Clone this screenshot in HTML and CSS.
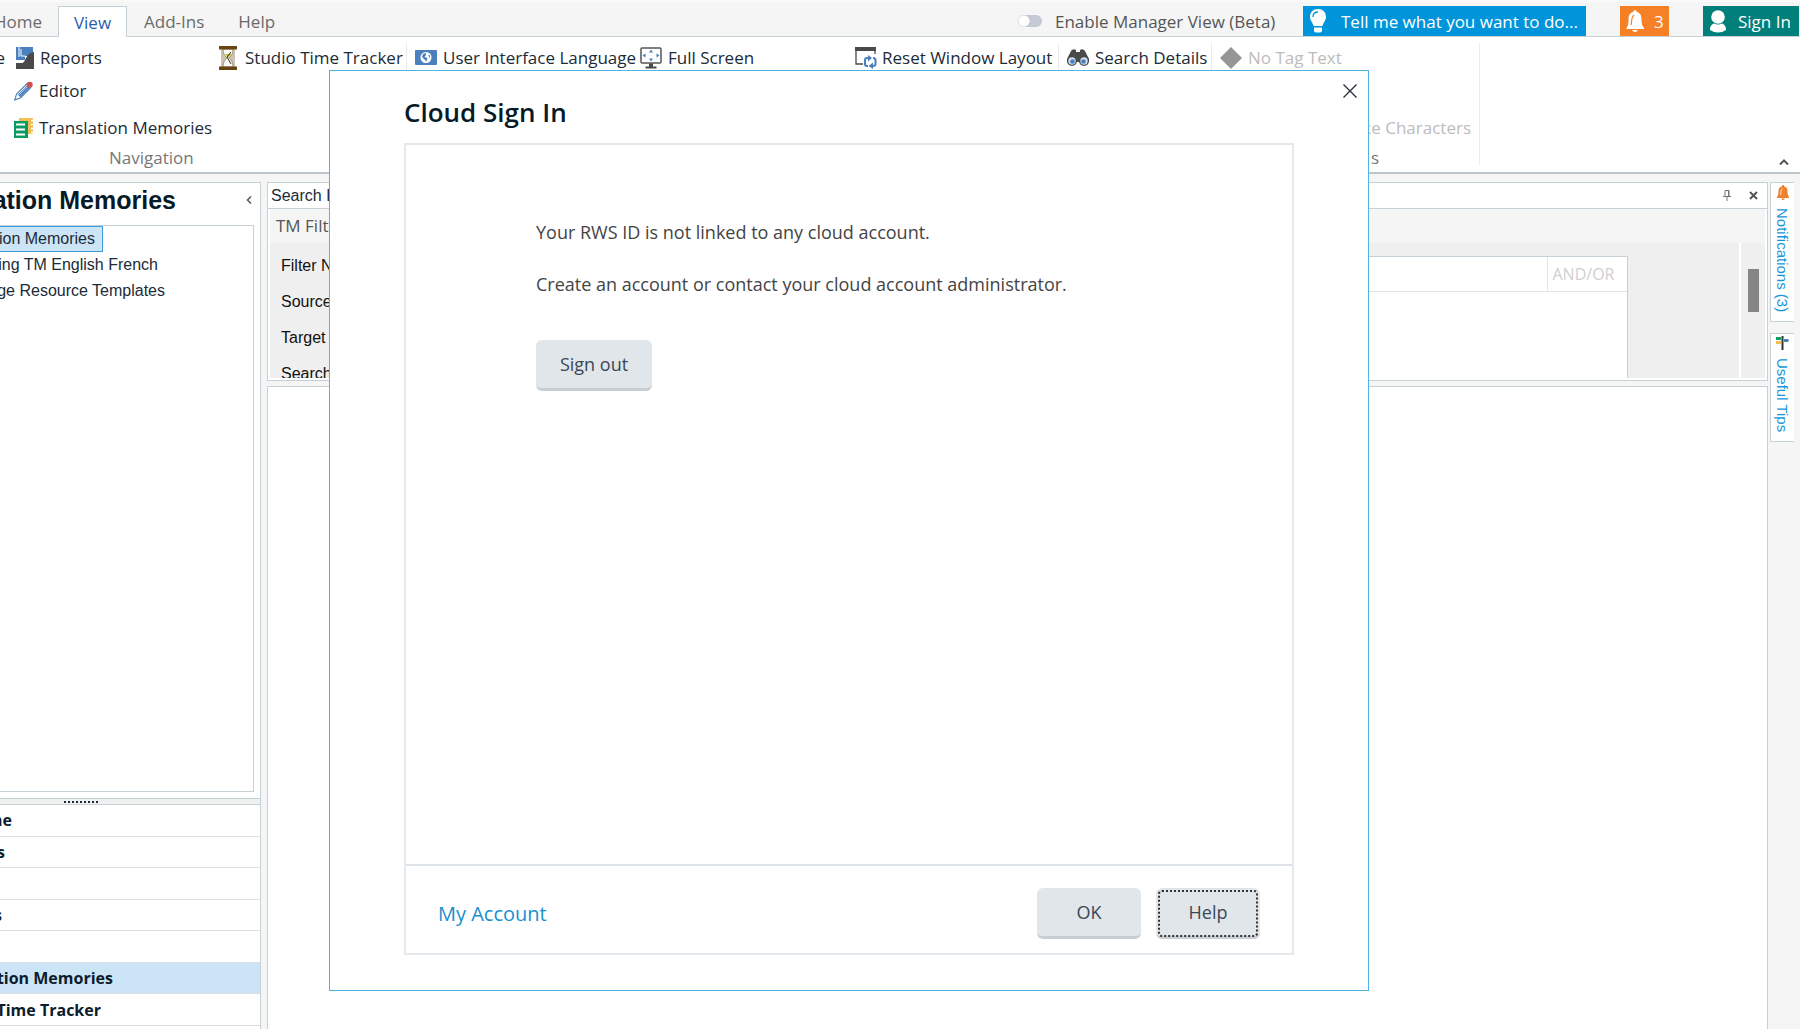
FILE: index.html
```
<!DOCTYPE html>
<html lang="en">
<head>
    <meta charset="UTF-8">
    <meta name="viewport" content="width=device-width, initial-scale=1.0">
    <title>Cloud Sign In</title>
    <link rel="stylesheet" href="styles.css">
</head>
<body>
    <div class="app">
        <header class="topbar">
            <nav class="tabs">
                <button class="tab tab-home">Home</button>
                <button class="tab active">View</button>
                <button class="tab">Add-Ins</button>
                <button class="tab">Help</button>
            </nav>
            <div class="manager">
                <input type="checkbox" id="manager-view">
                <label for="manager-view">Enable Manager View (Beta)</label>
            </div>
            <div class="tell-me">
                <svg width="18" height="24" viewBox="0 0 18 24"><path d="M9 0C4 0 1 3.500 1 8c0 3.500 2.500 5 3.500 9h9C14.500 13 17 11.500 17 8c0-4.500-3-8-8-8z" fill="#fff"/><path d="M4 8c0-3 2-5 5-5" fill="none" stroke="#0095da" stroke-width="1.300"/><path d="M5 18.500h8v3q0 2-2 2H7q-2 0-2-2z" fill="#fff"/></svg>
                <input type="text" class="tell-input" placeholder="Tell me what you want to do..." aria-label="Tell me what you want to do">
            </div>
            <button class="alerts">
                <svg width="18" height="22" viewBox="0 0 18 22"><path d="M9 0c1 0 1.600.8 1.600 1.800C14 2.600 15.500 5 15.500 9c0 5 1 7 2.500 9v1H.5v-1C2 16 2.500 14 2.500 9c0-4 1.500-6.400 4.900-7.200C7.400.8 8 0 9 0z" fill="#fff"/><path d="M5 15c1-3 0-8 3-10" fill="none" stroke="#f58025" stroke-width="1.200"/><path d="M6 20h6q-1 2-3 2t-3-2z" fill="#fff"/></svg>
                3
            </button>
            <button class="sign-in">
                <svg width="18" height="23" viewBox="0 0 18 23"><circle cx="9" cy="7" r="6.800" fill="#fff"/><path d="M1 20c0-4 2-6 4-6.500q4 2 8 0c2 .5 4 2.500 4 6.500q-8 5-16 0z" fill="#fff"/></svg>
                Sign In
            </button>
        </header>

        <section class="ribbon">
            <div class="group navigation">
                <div class="row">
                    <span class="clip-e">e</span>
                    <button class="tool">
                        <svg width="19" height="22" viewBox="0 0 19 22"><path d="M1 0h17v9h-8v4H1z" fill="#4a80bd"/><path d="M4 0v10M6 2v7h4" stroke="#fff" fill="none"/><path d="M1 22v-6h6c4 0 3-10 12-11v17z" fill="#4a4a4a"/></svg>
                        Reports
                    </button>
                </div>
                <div class="row indent">
                    <button class="tool">
                        <svg width="19" height="20" viewBox="0 0 20 20"><path d="M.7 19.300l2-6L13.500 2.500l4 4L6.700 17.300z" fill="#fff" stroke="#4a80bd" stroke-width="1.200"/><path d="M4 14L14 4l2.500 2.500-10 10z" fill="#4a80bd"/><path d="M5.500 14L14.500 5" stroke="#b8d0ea"/><circle cx="16.500" cy="3.500" r="3.200" fill="#d0504a"/></svg>
                        Editor
                    </button>
                </div>
                <div class="row indent">
                    <button class="tool">
                        <svg width="19" height="20" viewBox="0 0 19 20"><path d="M5 0h14v16H5z" fill="#eebf57"/><path d="M17 2.500h2M17 6.500h2M17 10.500h2M17 14.500h2" stroke="#fff" stroke-width="1.500"/><path d="M0 3h14v17H0z" fill="#0a9b63"/><path d="M2 6.500h9M2 11.500h9M2 16.500h9" stroke="#fff" stroke-width="2.200"/></svg>
                        Translation Memories
                    </button>
                </div>
                <div class="caption">Navigation</div>
            </div>
            <div class="group tracker">
                <div class="row">
                    <button class="tool">
                        <svg width="18" height="24" viewBox="0 0 18 24"><path d="M2 3h14v18H2z" fill="#cfc4ad"/><path d="M4 3h10c0 5-2 7-4 9 2 2 4 4 4 9H4c0-5 2-7 4-9-2-2-4-4-4-9z" fill="#fdfcf8" stroke="#9a8f78"/><path d="M6 8h7l-4 4z" fill="#bfc23a"/><path d="M12 6L8 11l4 7" stroke="#333" fill="none"/><path d="M0 0h18v3.500H0zM0 20.500h18V24H0z" fill="#6b4413"/></svg>
                        Studio Time Tracker
                    </button>
                </div>
            </div>
            <div class="group display">
                <div class="row">
                    <button class="tool language">
                        <svg width="22" height="15" viewBox="0 0 22 15"><rect width="22" height="15" rx="1" fill="#4a80bd"/><circle cx="11" cy="7.500" r="5.500" fill="#fff"/><path d="M8 4l3-1v2L9.500 7l3 1-1 3.500L9 9 7 7zM13 4.500l2 1v3z" fill="#4a80bd"/></svg>
                        User Interface Language
                    </button>
                    <button class="tool">
                        <svg width="22" height="22" viewBox="0 0 22 22"><rect x="1" y="1" width="20" height="15" rx="1" fill="#fff" stroke="#555" stroke-width="1.500"/><path d="M11 2.500l2 3H9zM11 14.500l2-3H9zM2.500 8.500l3-2v4zM19.500 8.500l-3-2v4z" fill="#4a80bd"/><path d="M9 16.500h4v3h3.500V21.500h-11V19.500H9z" fill="#4a4a4a"/></svg>
                        Full Screen
                    </button>
                </div>
            </div>
            <div class="group layout">
                <div class="row">
                    <button class="tool">
                        <svg width="22" height="22" viewBox="0 0 22 22"><path d="M1 4v13h7M20 4v3" fill="none" stroke="#4a4a4a" stroke-width="1.300"/><path d="M0 0h21v4H0z" fill="#4a4a4a"/><path d="M14 11h-2q-2 0-2 2v4q0 2 2 2h1M17 19h1q2.500 0 2.500-2v-4q0-2-2.500-2" fill="none" stroke="#4a80bd" stroke-width="2"/><path d="M13 8l4 3-4 3.500zM18 15.500l-4.500 3.500 4.500 3z" fill="#4a80bd"/></svg>
                        Reset Window Layout
                    </button>
                </div>
            </div>
            <div class="group details">
                <div class="row">
                    <button class="tool">
                        <svg width="22" height="17" viewBox="0 0 22 17"><path d="M4 2q2-3 5-1v2h4V1q3-2 5 1l4 8v3H0v-3z" fill="#4a4a4a"/><circle cx="5" cy="12" r="5" fill="#4a4a4a"/><circle cx="17" cy="12" r="5" fill="#4a4a4a"/><circle cx="5" cy="12" r="3.700" fill="#cfe0f3"/><circle cx="17" cy="12" r="3.700" fill="#cfe0f3"/><circle cx="5.500" cy="12.500" r="2.300" fill="#4a80bd"/><circle cx="16.500" cy="12.500" r="2.300" fill="#4a80bd"/></svg>
                        Search Details
                    </button>
                </div>
            </div>
            <div class="group tags">
                <div class="row">
                    <button class="tool" disabled>
                        <svg width="22" height="22" viewBox="0 0 22 22"><path d="M11 0l11 11-11 11L0 11z" fill="#969696"/></svg>
                        No Tag Text
                    </button>
                </div>
                <div class="row"></div>
                <div class="row right">
                    <button class="tool" disabled>ce Characters</button>
                </div>
                <div class="caption">s</div>
            </div>
            <button class="collapse" aria-label="Collapse ribbon">
                <svg width="10" height="6" viewBox="0 0 10 6"><path d="M1 5.500l4-4 4 4" fill="none" stroke="#555" stroke-width="2"/></svg>
            </button>
        </section>

        <main class="workspace">
            <aside class="sidebar">
                <div class="side-head">
                    <h2 class="side-title">ation Memories</h2>
                    <button class="plain" aria-label="Collapse panel">
                        <svg width="6" height="8" viewBox="0 0 6 8"><path d="M5 .5L1.500 4 5 7.500" fill="none" stroke="#555" stroke-width="1.500"/></svg>
                    </button>
                </div>
                <div class="tree">
                    <button class="node selected">tion Memories</button>
                    <button class="node french">ing TM English French</button>
                    <button class="node resource">ge Resource Templates</button>
                </div>
                <div class="splitter">
                    <svg width="36" height="3" viewBox="0 0 36 3"><path d="M1 2h35" stroke="#1b2b38" stroke-width="2" stroke-dasharray="2 2"/></svg>
                </div>
                <nav class="views">
                    <button class="view"><span class="w-me">me</span></button>
                    <button class="view"><span class="w-s">s</span></button>
                    <button class="view" aria-label="Files"></button>
                    <button class="view"><span class="w-edge">s</span></button>
                    <button class="view" aria-label="Editor"></button>
                    <button class="view current"><span class="w-tm">tion Memories</span></button>
                    <button class="view"><span class="w-tt">Time Tracker</span></button>
                </nav>
            </aside>

            <div class="center">
                <section class="search-panel">
                    <div class="panel-head">
                        <span class="panel-title">Search Details</span>
                        <button class="plain" aria-label="Pin">
                            <svg width="8" height="11" viewBox="0 0 8 11"><path d="M2 .5h4v6H2zM0 6.500h8M4 6.500V11M5.500 1v5" fill="none" stroke="#777"/></svg>
                        </button>
                        <button class="plain" aria-label="Close panel">
                            <svg width="9" height="9" viewBox="0 0 9 9"><path d="M1 1l7 7M8 1L1 8" stroke="#555" stroke-width="2"/></svg>
                        </button>
                    </div>
                    <div class="filter-title">TM Filter</div>
                    <div class="filter">
                        <div class="filter-body">
                            <div class="labels">
                                <div>Filter Name</div>
                                <div>Source</div>
                                <div>Target</div>
                                <div>Search</div>
                            </div>
                            <div class="conditions">
                                <table>
                                    <tr><td></td><td class="andor">AND/OR</td></tr>
                                </table>
                            </div>
                        </div>
                        <div class="scrollbar"><div class="thumb"></div></div>
                    </div>
                </section>
                <section class="results"></section>
            </div>

            <aside class="dock">
                <button class="dock-tab">
                    <svg width="12" height="15" viewBox="0 0 12 15"><path d="M6 0c.8 0 1 .5 1 1.200C9.500 2 10.500 3.500 10.500 6c0 3 .5 4.500 1.500 6v1H0v-1c1-1.500 1.500-3 1.500-6C1.500 3.500 2.500 2 5 1.200 5 .5 5.200 0 6 0zM4 13.500h4q-1 1.500-2 1.500t-2-1.500z" fill="#f0812b"/><path d="M3.500 10c.5-2 0-5 2-6.500" stroke="#fff" fill="none" stroke-width=".8"/></svg>
                    Notifications (3)
                </button>
                <button class="dock-tab">
                    <svg width="13" height="14" viewBox="0 0 13 14"><path d="M0 1h5v3H0z" fill="#0a9b63"/><path d="M0 5h5v3H0z" fill="#eebf57"/><path d="M8 3h4l1 1.500L12 6H8z" fill="#4a80bd"/><path d="M6.500 0v14" stroke="#333" stroke-width="2"/></svg>
                    Useful Tips
                </button>
            </aside>
        </main>
    </div>

    <div class="dialog" role="dialog" aria-labelledby="dialog-title">
        <button class="close" aria-label="Close">
            <svg width="14" height="14" viewBox="0 0 14 14"><path d="M.5.5l13 13M13.500.5l-13 13" stroke="#222e3a" stroke-width="1.300"/></svg>
        </button>
        <h1 class="dialog-title" id="dialog-title">Cloud Sign In</h1>
        <div class="dialog-body">
            <div class="message">
                <p>Your RWS ID is not linked to any cloud account.</p>
                <p>Create an account or contact your cloud account administrator.</p>
                <button class="btn">Sign out</button>
            </div>
            <div class="dialog-footer">
                <a href="#">My Account</a>
                <button class="btn">OK</button>
                <button class="btn focused">Help</button>
            </div>
        </div>
    </div>
</body>
</html>
```
FILE: styles.css
```
* {
  box-sizing: border-box;
}

body {
  margin: 0;
  overflow: hidden;
  background-color: #f5f5f5;
  color: #1b2b38;
  font-family: "Segoe UI", "Open Sans", sans-serif;
  font-size: 17px;
}

button {
  margin: 0;
  padding: 0;
  border: none;
  background: none;
  color: inherit;
  font: inherit;
  white-space: nowrap;
}

svg {
  flex: none;
}

.app {
  display: flex;
  flex-direction: column;
  height: 100vh;
}

/* top bar */
.topbar {
  display: flex;
  align-items: stretch;
  height: 37px;
  padding: 4px 1px 0 0;
  border-top: 2px solid #fafafa;
  border-bottom: 1px solid #c5d1d7;
  color: #6a6a6a;
}

.tabs {
  display: flex;
  flex: 1;
  margin-bottom: -1px;
}

.tab {
  padding: 0 17px;
}

.tab-home {
  display: flex;
  justify-content: flex-end;
  align-items: center;
  width: 58px;
  padding: 0 16px 0 0;
  overflow: hidden;
}

.tab.active {
  width: 69px;
  padding: 0;
  border: 1px solid #c5d1d7;
  border-bottom: none;
  background-color: #fff;
  color: #2a5db0;
}

.manager {
  display: flex;
  align-items: center;
  gap: 13px;
  width: 285px;
  color: #555;
}

.manager input {
  appearance: none;
  width: 24px;
  height: 12px;
  margin: 0;
  border-radius: 6px;
  background: radial-gradient(circle at 6px 6px, #fff 5px, #c5c9d6 6px);
}

.manager label {
  white-space: nowrap;
}

.tell-me {
  display: flex;
  align-items: center;
  gap: 14px;
  width: 283px;
  margin-right: 34px;
  padding-left: 6px;
  background-color: #0095da;
}

.tell-input {
  flex: 1;
  min-width: 0;
  padding: 0;
  border: none;
  background: none;
  color: #fff;
  font: inherit;
}

.tell-input::placeholder {
  color: #fff;
  opacity: 1;
}

.alerts, .sign-in {
  display: flex;
  align-items: center;
  color: #fff;
}

.alerts {
  gap: 10px;
  width: 49px;
  margin-right: 34px;
  padding-left: 6px;
  background-color: #f58025;
}

.sign-in {
  gap: 11px;
  width: 96px;
  padding-left: 6px;
  background-color: #007f7b;
}

/* ribbon */
.ribbon {
  display: flex;
  height: 137px;
  padding-top: 4px;
  border-bottom: 2px solid #bcc6cd;
  background-color: #fff;
}

.group {
  display: flex;
  flex-direction: column;
  margin: 2px 0 7px;
  padding-left: 8px;
}

.row {
  display: flex;
  flex: none;
  align-items: center;
  height: 37px;
}

.row:first-child {
  height: 29px;
}

.tool {
  display: flex;
  align-items: center;
  gap: 6px;
}

.tool:disabled {
  color: #bcbcbc;
}

.caption {
  line-height: 24px;
  color: #777;
}

.navigation {
  width: 211px;
  padding-left: 0;
}

.navigation .caption {
  padding-left: 109px;
}

.navigation .row {
  gap: 10px;
}

.clip-e {
  display: flex;
  justify-content: flex-end;
  width: 5px;
  overflow: hidden;
}

.indent {
  padding-left: 14px;
}

.tracker {
  width: 196px;
  border-right: 1px solid #ebebeb;
}

.tracker .tool {
  gap: 8px;
}

.display {
  width: 440px;
}

.language {
  width: 225px;
}

.layout {
  width: 212px;
  border-right: 1px solid #ebebeb;
}

.layout .tool {
  gap: 5px;
}

.details {
  width: 153px;
  border-right: 1px solid #ebebeb;
}

.tags {
  width: 268px;
  padding-right: 8px;
  border-right: 1px solid #ebebeb;
}

.right {
  justify-content: flex-end;
}

.tags .caption {
  padding-left: 151px;
}

.collapse {
  align-self: flex-end;
  margin: 0 11px 2px auto;
}

/* workspace */
.workspace {
  display: flex;
  flex: 1;
  min-height: 0;
  padding-top: 8px;
  font-family: Arial, "Liberation Sans", sans-serif;
  font-size: 16px;
}

.sidebar {
  display: flex;
  flex-direction: column;
  width: 261px;
  margin-right: 6px;
  border: 1px solid #c5d1d7;
  border-width: 1px 1px 0 0;
  background-color: #fff;
}

.side-head {
  display: flex;
  align-items: center;
  justify-content: space-between;
  height: 42px;
  padding: 0 8px 8px 0;
}

.side-title {
  display: flex;
  justify-content: flex-end;
  width: 176px;
  margin: 0;
  overflow: hidden;
  font-size: 25px;
  line-height: 34px;
  white-space: nowrap;
  color: #061a28;
}

.tree {
  height: 567px;
  margin-right: 6px;
  border: 1px solid #c5d1d7;
  border-left: none;
}

.node {
  display: flex;
  justify-content: flex-end;
  align-items: center;
  height: 26px;
  overflow: hidden;
}

.node.selected {
  width: 103px;
  padding-right: 7px;
  border: 1px solid #3f9bdc;
  border-left: none;
  background-color: #cce5f6;
}

.french {
  width: 158px;
}

.resource {
  width: 165px;
}

.splitter {
  display: flex;
  justify-content: center;
  align-items: center;
  height: 7px;
  margin-top: 6px;
  padding-right: 98px;
  border: 1px solid #c5d1d7;
  border-width: 1px 0;
  background-color: #f0f0f0;
}

.views {
  display: grid;
  grid-auto-rows: 1fr;
  height: 221px;
  font-family: "Segoe UI", "Open Sans", sans-serif;
  font-size: 16px;
  font-weight: bold;
}

.view {
  border-bottom: 1px solid #dcdfe1;
  color: #0c1c2c;
  overflow: hidden;
}

.view.current {
  background-color: #cce5f6;
}

.view span {
  display: flex;
  justify-content: flex-end;
  overflow: hidden;
}

.w-me {
  width: 12px;
}

.w-s {
  width: 5px;
}

.w-edge {
  width: 2px;
}

.w-tm {
  width: 113px;
}

.w-tt {
  width: 101px;
}

.center {
  display: flex;
  flex-direction: column;
  flex: 1;
  gap: 5px;
}

.search-panel {
  height: 199px;
  border: 1px solid #c5d1d7;
  background-color: #fff;
}

.panel-head {
  display: flex;
  align-items: center;
  gap: 18px;
  height: 26px;
  padding: 0 9px 0 3px;
  border-bottom: 1px solid #c5d1d7;
}

.panel-title {
  flex: 1;
}

.plain {
  display: flex;
}

.filter-title {
  height: 34px;
  margin: 0 2px;
  padding-left: 6px;
  background-color: #f5f5f5;
  color: #555;
  font-family: "Segoe UI", "Open Sans", sans-serif;
  font-size: 17px;
  line-height: 34px;
}

.filter {
  display: flex;
  gap: 2px;
  height: 135px;
  margin: 0 2px;
  overflow: hidden;
}

.filter-body {
  display: flex;
  flex: 1;
  padding: 13px 111px 0 11px;
  background-color: #efefef;
  color: #111;
}

.labels {
  width: 160px;
  line-height: 34px;
  margin-top: -7px;
}

.labels div {
  height: 36px;
}

.conditions {
  flex: 1;
  border: 1px solid #c5d1d7;
  border-width: 1px 1px 0;
  background-color: #fff;
}

.conditions table {
  width: 100%;
  border-collapse: collapse;
}

.conditions td {
  height: 34px;
  padding: 0;
  border-bottom: 1px solid #e4e4e4;
}

.conditions .andor {
  width: 80px;
  padding-left: 5px;
  border-left: 1px solid #e4e4e4;
  color: #cfcfcf;
  font-family: "Segoe UI", "Open Sans", sans-serif;
  font-size: 16px;
}

.scrollbar {
  width: 24px;
  padding: 26px 6px 0 7px;
  background-color: #efefef;
}

.thumb {
  height: 43px;
  background-color: #858585;
}

.results {
  flex: 1;
  border: 1px solid #c5d1d7;
  border-bottom: none;
  background-color: #fff;
}

.dock {
  display: flex;
  flex-direction: column;
  gap: 11px;
  width: 24px;
  margin: 0 6px 0 2px;
}

.dock-tab {
  display: flex;
  align-items: center;
  gap: 8px;
  padding: 2px 0 9px;
  border: 1px solid #c5d1d7;
  border-right: none;
  background-color: #fff;
  color: #1696dc;
  font-size: 15px;
  writing-mode: vertical-rl;
}

/* dialog */
.dialog {
  position: absolute;
  top: 70px;
  right: 431px;
  left: 329px;
  padding: 24px 74px 35px;
  border: 1px solid #4db4e4;
  background-color: #fff;
  font-size: 18px;
}

.close {
  position: absolute;
  top: 13px;
  right: 11px;
  display: flex;
}

.dialog-title {
  margin: 0 0 14px;
  font-size: 26px;
  font-weight: 600;
  line-height: 34px;
  color: #061a28;
}

.dialog-body {
  border: 2px solid #e4e9ed;
}

.message {
  min-height: 719px;
  padding: 73px 130px 0;
  color: #444;
}

.message p {
  margin: 0 0 24px;
  line-height: 28px;
}

.message .btn {
  width: 116px;
  margin-top: 18px;
}

.btn {
  width: 104px;
  height: 51px;
  border-bottom: 3px solid #c8ced3;
  border-radius: 6px;
  background-color: #e1e6ea;
  color: #3a4856;
}

.dialog-footer {
  display: flex;
  align-items: center;
  gap: 15px;
  height: 89px;
  padding: 8px 32px 0;
  border-top: 2px solid #dde3e8;
}

.dialog-footer a {
  flex: 1;
  color: #1a8fd0;
  font-size: 20px;
  text-decoration: none;
}

.focused {
  outline: 2px dotted #333;
  outline-offset: -4px;
}
```
